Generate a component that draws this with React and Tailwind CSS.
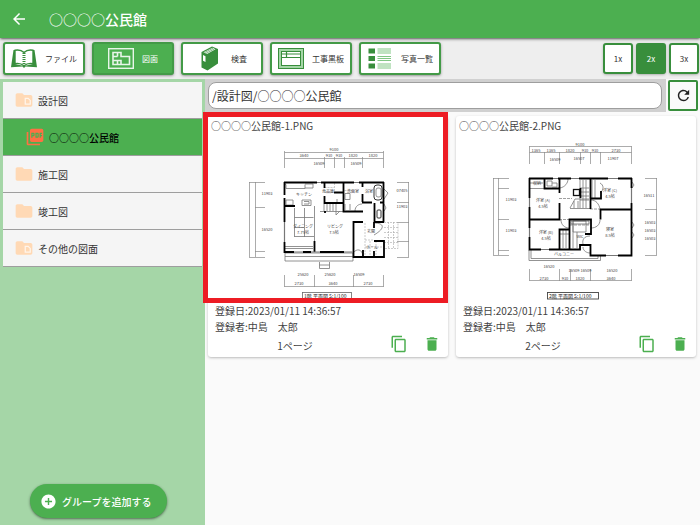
import { MdAddCircle, MdArrowBack, MdContentCopy, MdDelete, MdFolder, MdPictureAsPdf, MdRefresh } from "react-icons/md";

function FileIcon() {
  return (
    <svg viewBox="0 0 26 19" className="h-[19px] w-[26px]" aria-hidden="true">
      <path d="M2.500 1 0 18.200 11.500 17.600 13 19 14.500 17.600 26 18.200 23.500 1H22V15L13 17 4 15V1Z" fill="#388e3c" />
      <path d="M4 1.200C7 0.600 10.500 1 13 3.600 15.500 1 19 0.600 22 1.200V14.600C19 14 15.500 14.600 13 16.800 10.500 14.600 7 14 4 14.600Z" fill="#fff" stroke="#388e3c" strokeWidth="1.400" />
      <path d="M13 4V16.500" stroke="#388e3c" strokeWidth="3" strokeDasharray="1 1" />
    </svg>
  );
}

function PlanIcon() {
  return (
    <svg viewBox="0 0 26 21" className="h-[21px] w-[26px]" fill="none" stroke="#e8f5e9" aria-hidden="true">
      <rect x="0.700" y="0.700" width="24.600" height="19.600" strokeWidth="1.400" />
      <path d="M5 4.500H13V8.500H21.500V16.500H5ZM9.500 4.500V8.500M5 8.500H9.500M5 12.500H13V16.500M9.500 12.500V16.500" strokeWidth="1.600" />
    </svg>
  );
}

function InspectIcon() {
  return (
    <svg viewBox="0 0 18 25" className="h-[25px] w-[18px]" aria-hidden="true">
      <path d="M0.500 6 11 0.500 17 3V17.500L6.500 24.500 0.500 21.500Z" fill="#388e3c" />
      <path d="M2.500 6.300 11.500 1.800 14.500 3.200 6 8Z" fill="#fff" />
      <path d="M3.500 6.600 12 2.300M5 7.400 13.500 2.900" stroke="#388e3c" strokeWidth="0.600" />
      <path d="M2 9 4.500 10.200V16L2 14.800Z" fill="#fff" />
    </svg>
  );
}

function BoardIcon() {
  return (
    <svg viewBox="0 0 26 21" className="h-[21px] w-[26px]" fill="none" stroke="#388e3c" aria-hidden="true">
      <rect x="0.500" y="0.500" width="25" height="20" />
      <rect x="2" y="2" width="22" height="17" stroke="#a5d6a7" strokeWidth="2" />
      <rect x="3.500" y="3.500" width="19" height="14" />
      <path d="M3.500 6H22.500M3.500 9.500H22.500M8.500 3.500V9.500" strokeWidth="1.200" />
    </svg>
  );
}

function ListIcon() {
  return (
    <svg viewBox="0 0 24 21" className="h-[21px] w-6" aria-hidden="true">
      <path d="M0.500 0.500H7V5.500H0.500ZM0.500 8H7V13H0.500ZM0.500 15.500H7V20.500H0.500Z" fill="#388e3c" />
      <path
        d="M9.500 1H23M9.500 3H23M9.500 5H23M9.500 8.500H23M9.500 10.500H23M9.500 12.500H23M9.500 16H23M9.500 18H23M9.500 20H23"
        stroke="#81c784"
      />
    </svg>
  );
}

function FolderFileIcon() {
  return (
    <svg viewBox="0 0 24 24" className="h-5 w-5" aria-hidden="true">
      <path d="M10 4H4c-1.100 0-2 .9-2 2v12c0 1.100.9 2 2 2h16c1.100 0 2-.9 2-2V8c0-1.100-.9-2-2-2h-8l-2-2z" fill="#ffd9b5" />
      <path d="M13.500 10H17l2.500 2.500V17h-6Z" fill="none" stroke="#fff5eb" strokeWidth="1.500" />
    </svg>
  );
}

const PLAN_FONT = '"Noto Sans CJK JP", sans-serif';

function Labels({ items }) {
  return (
    <g fill="#444" stroke="none" fontSize="4" textAnchor="middle" fontFamily={PLAN_FONT}>
      {items.map(([x, y, t]) => (
        <text key={`${x}-${y}`} x={x} y={y}>{t}</text>
      ))}
    </g>
  );
}

function FirstFloor() {
  return (
    <svg viewBox="208 136 240 166" className="block w-full" fill="none" role="img" aria-label="1階 平面図">
      <path
        d="M284.500 152.500H383.500M284.500 158.500H383.500M284.500 151V168M324.500 157V168M334.500 157V168M344.500 157V168M362.500 157V168M383.500 151V168M249.500 182V257M255.500 182V257M249 182.500H265M255 207.500H265M255 251.500H265M249 257.500H265M408.500 182V257M397 182.500H409M397 202.500H409M397 222.500H409M397 241.500H409M397 257.500H409M284.500 286.500H383.500M284.500 275V287M314.500 275V287M353.500 275V287M383.500 275V287"
        stroke="#888" strokeWidth="0.700"
      />
      <path
        d="M384 222.500H398V248.500H384M384 227.500H398M384 232.500H398M384 237.500H398M384 242.500H398M388.500 222V248M393.500 222V248M365 223V255M370 241V255M376 241V255M365 240H374M365 247H382M324.500 187.500H334M324.500 192.500H334M334.500 183V192M344.500 190.500H352"
        stroke="#aaa" strokeWidth="0.600" strokeDasharray="2 1"
      />
      <path
        d="M285 184.500H286V188.500H305V184.500M305 184H313V188H305M286 200H293V205H286ZM302 200H311V205.500H302ZM304 201.500H309V204H304M314.500 206V241M294.500 208V237M294.500 217.500H304.500V208M304.500 217.500H313.500M294.500 227.500H304.500V237M304.500 217V227M294.500 236.500H314M285 246.500H313M285 248.500H313M285 253H353V261H285ZM285 256.500H353M319.500 262V268.500H329.500V262M319.500 265H329.500M324 204V211M327 204V211M330 204V211M333 204V211M336 204V215L340 211M320 211.500H343M345 193.500H350V199.500H345ZM345 204V210M350 204V210M355 211C355 206 359 204 362 204M374 223C384 223 386 228 374 235M353 253C357 248 362 249 363 256M384 189L388 193 384 199M384 204L386 208 384 211M337 199V202"
        stroke="#777" strokeWidth="0.800"
      />
      <rect x="374" y="185" width="8" height="15" rx="3" stroke="#333" />
      <rect x="376" y="188" width="5" height="9" rx="2" stroke="#666" strokeWidth="0.700" />
      <rect x="377" y="210" width="4" height="8" rx="1" stroke="#333" />
      <path
        d="M284 182.500H317M321 182.500H354M359 182.500H384M284.500 182V195M284.500 198V222M284.500 242V252H294M303 252H311M320 252H344M314.500 241V252M324.500 182V188M324.500 196V203H344M334 192.500H343M343.500 182V211.500H363M362.500 182V187M362.500 194V202M362 202.500H372M380 202.500H384M383.500 182V222M374.500 203V222H384M353.500 221V257H384V241H374M353 222H363M363 250V257M374 251V257M374 222V228M284 206H295M325 211V213"
        stroke="#000" strokeWidth="1.800"
      />
      <path d="M284.500 222V242M294 252H303M344 252H353M311 252H320M317 182.500H321M354 182.500H359" stroke="#777" strokeWidth="1.200" />
      <Labels
        items={[
          [334, 151, "9100"], [304, 157, "3640"], [329, 157, "910"], [339, 157, "910"], [353, 157, "1820"], [373, 157, "1820"],
          [319, 165, "16509"], [356, 165, "16509"], [267, 195, "11903"], [267, 231, "16520"], [402, 192, "07405"], [402, 208, "11903"],
          [304, 196, "キッチン"], [303, 228, "ダイニング"], [335, 228, "リビング"], [303, 234, "7.75帖"], [334, 234, "7.5帖"],
          [328, 193, "食品庫"], [353, 193, "洗面室"], [369, 193, "浴室"], [371, 233, "玄関"], [372, 249, "ホール"],
          [299, 285, "2730"], [333, 285, "3640"], [368, 285, "2730"], [303, 276, "25620"], [330, 276, "25620"], [359, 276, "16509"],
        ]}
      />
      <rect x="302.500" y="292.500" width="49" height="6.500" stroke="#666" strokeWidth="0.800" />
      <text x="304" y="298" fontSize="5" fill="#222" fontFamily={PLAN_FONT}>1階 平面図 S:1/100</text>
    </svg>
  );
}

function SecondFloor() {
  return (
    <svg viewBox="456 136 240 166" className="block w-full" fill="none" role="img" aria-label="2階 平面図">
      <path
        d="M529.500 146.500H631.500M529.500 152.500H631.500M529.500 146V164M544.500 152V164M559.500 152V164M580.500 152V164M590.500 152V164M600.500 152V164M631.500 146V164M493.500 178V255M498.500 178V255M493 178.500H509M498 188.500H509M498 219.500H509M498 250.500H509M493 255.500H509M656.500 178V255M645 178.500H657M645 209.500H657M645 255.500H657M529.500 280.500H631.500M529.500 269V281M559.500 269V281M570.500 269V281M590.500 269V281M631.500 269V281"
        stroke="#888" strokeWidth="0.700"
      />
      <path
        d="M529 188.500H544M530 183H543M547 181H552V186H547ZM560 188C565 187 568 183 568 179M580 180V208M583 180V208M586 180V208M580 188H589M580 192H589M580 196H589M580 200H589M570 208L575 199H589M574 208V201M578 208V201M570 208.500H590M529 250V260.500H600.500V255M531 250V258.500H598V255M592 180V198M595 180V198M600 183C604 185 604 190 600 193M591 200C596 200 599 204 600 209M561 220C561 225 565 228 569 228M591 228C596 228 600 225 600 220M573 221H586V232H573ZM573 221V248M577 232V248M560 234H569M563 230V248M566 230V248M590 236C584 236 582 240 583 244M583 247C583 251 587 253 590 253M552 183H557V187H552M632 182L634 185 632 188M632 222L634 225 632 228M632 232L634 235 632 238"
        stroke="#777" strokeWidth="0.800"
      />
      <path d="M559 198.500H572M559 219.500H570M590 209H600M570 225H590" stroke="#888" strokeWidth="0.800" strokeDasharray="3 1" />
      <rect x="573.500" y="189.500" width="6" height="6" stroke="#111" strokeWidth="1.300" />
      <rect x="571" y="221" width="18" height="3" stroke="#555" strokeWidth="0.700" />
      <path
        d="M529 178.500H553M558 178.500H571M579 178.500H608M618 178.500H632M529.500 178V198M529.500 207V228M529.500 237V249.500H541M549 249.500H561M544.500 178V188.500H560M559.500 178V193M559.500 203V219.500H529M590.500 178V209M580.500 188V198M590 198.500H601V191M600.500 209V219.500M600 209.500H632M631.500 178V188M631.500 203V255.500H618M606 255.500H590.500V245H580V249.500H559M569.500 249V219.500H591V234H585M559.500 249V229.500H569M559.500 205V219.500"
        stroke="#000" strokeWidth="1.800"
      />
      <path d="M529.500 198V207M529.500 228V237M541 249.500H549M606 255.500H618M608 178.500H618M571 178.500H579M553 178.500H558M631.500 188V203" stroke="#777" strokeWidth="1.200" />
      <Labels
        items={[
          [580, 146, "9100"], [536, 152, "1365"], [551, 152, "1365"], [570, 152, "1820"], [585, 152, "910"], [595, 152, "910"], [616, 152, "2730"],
          [555, 161, "16509"], [579, 160, "16507"], [613, 160, "11907"], [511, 201, "11903"], [511, 232, "11903"], [649, 197, "16511"],
          [650, 224, "16503"], [650, 232, "16503"], [650, 240, "16503"], [543, 202, "洋室 (A)"], [543, 208, "4.5帖"],
          [610, 192, "洋室 (C)"], [610, 198, "4.5帖"], [546, 234, "洋室 (B)"], [546, 240, "4.5帖"], [610, 231, "寝室"], [610, 237, "8.5帖"],
          [564, 256, "バルコニー"], [580, 238, "WIC"], [537, 185, "収納"],
          [544, 280, "2730"], [565, 280, "910"], [580, 280, "1820"], [611, 280, "3640"], [549, 268, "16520"], [580, 272, "16509 16509"], [612, 272, "16520"],
        ]}
      />
      <rect x="547.500" y="292.500" width="51" height="6.500" stroke="#444" strokeWidth="0.900" />
      <text x="549" y="298" fontSize="5" fill="#222" fontFamily={PLAN_FONT}>2階 平面図 S:1/100</text>
    </svg>
  );
}

const tabs = [
  { label: "ファイル", Icon: FileIcon },
  { label: "図面", Icon: PlanIcon, active: true },
  { label: "検査", Icon: InspectIcon },
  { label: "工事黒板", Icon: BoardIcon },
  { label: "写真一覧", Icon: ListIcon },
];

const groups = [
  { label: "設計図", file: true },
  { label: "○○○○公民館", active: true },
  { label: "施工図" },
  { label: "竣工図" },
  { label: "その他の図面", file: true },
];

function Tab({ label, Icon, active }) {
  return (
    <button
      type="button"
      className={`flex h-[33px] w-[82px] items-center justify-center gap-2 rounded-[3px] border-2 border-[#439a47] text-[8px] shadow-sm shadow-black/30 ${active ? "bg-[#4caf50] text-white" : "bg-white text-[#333]"}`}
    >
      <span className="flex w-[26px] shrink-0 justify-center">
        <Icon />
      </span>
      <span className="whitespace-nowrap">{label}</span>
    </button>
  );
}

function ZoomButton({ label, active }) {
  return (
    <button
      type="button"
      className={`h-[31px] w-[30px] rounded-[3px] border-2 border-[#388e3c] text-[8px] shadow-sm shadow-black/20 ${active ? "bg-[#388e3c] text-white" : "bg-white text-[#333]"}`}
    >
      {label}
    </button>
  );
}

function Group({ label, file, active }) {
  return (
    <li>
      <button
        type="button"
        className={`flex h-[37px] w-full items-center gap-1 border-b border-[#9e9e9e] text-left text-[10px] ${active ? "bg-[#4caf50] pl-[22px] font-medium text-black" : "bg-[#f5f5f5] pl-[11px] text-[#333]"}`}
      >
        {active ? <MdPictureAsPdf size={20} color="#ff7043" /> : file ? <FolderFileIcon /> : <MdFolder size={20} color="#ffd9b5" />}
        {label}
      </button>
    </li>
  );
}

function Card({ title, pages, selected, children }) {
  return (
    <article className="relative rounded-[3px] bg-white text-[10px] text-[#424242] shadow-sm shadow-black/20">
      <h2 className="h-5 px-[3px] leading-5">{title}</h2>
      {children}
      <div className="px-[7px] pt-px leading-4">
        <p>登録日:2023/01/11 14:36:57</p>
        <p>登録者:中島　太郎</p>
      </div>
      <div className="flex h-[22px] items-center pr-[7px] pb-1">
        <p className="flex-1 pt-1 pr-2 text-center leading-4">{pages}</p>
        <div className="flex gap-[15px] text-[#4caf50]">
          <button type="button" aria-label="コピー"><MdContentCopy size={18} /></button>
          <button type="button" aria-label="削除"><MdDelete size={18} /></button>
        </div>
      </div>
      {selected && <div className="pointer-events-none absolute -top-1 right-0 -left-[5px] h-[191px] border-5 border-[#ed1c24]" />}
    </article>
  );
}

export default function App() {
  return (
    <div className="flex min-h-screen flex-col bg-[#fafafa] font-['Noto_Sans_CJK_JP','Noto_Sans',sans-serif]">
      <header className="relative flex h-[38px] items-center gap-[21px] bg-[#4caf50] px-[10px] text-white shadow-sm shadow-black/50">
        <button type="button" aria-label="戻る"><MdArrowBack size={18} /></button>
        <h1 className="text-[14px] font-medium">○○○○公民館</h1>
      </header>

      <div className="flex h-[41px] items-center justify-between bg-[#eee] pr-px pl-[3px]">
        <nav className="flex gap-[7px]">
          {tabs.map((t) => <Tab key={t.label} {...t} />)}
        </nav>
        <div className="flex gap-[3px]">
          <ZoomButton label="1x" />
          <ZoomButton label="2x" active />
          <ZoomButton label="3x" />
        </div>
      </div>

      <div className="flex flex-1">
        <aside className="flex w-[205px] shrink-0 flex-col justify-between bg-[#a5d6a7] p-[3px]">
          <ul>
            {groups.map((g) => <Group key={g.label} {...g} />)}
          </ul>
          <button
            type="button"
            className="mr-2 mb-1 flex h-[34px] w-[137px] items-center gap-[5px] self-center rounded-full bg-[#4caf50] pl-[10px] text-[10px] font-medium text-white shadow-sm shadow-black/40"
          >
            <MdAddCircle size={17} />
            グループを追加する
          </button>
        </aside>

        <main className="min-w-0 flex-1">
          <div className="flex h-[33px]">
            <div className="flex flex-1 items-center bg-[#d0d0d0] pr-1 pl-[3px]">
              <input
                type="text"
                aria-label="フォルダーのパス"
                defaultValue="/設計図/○○○○公民館"
                className="h-[27px] w-full rounded-lg border border-[#9e9e9e] bg-white px-[3px] text-[12px] text-[#333]"
              />
            </div>
            <div className="flex items-center px-[2px]">
              <button type="button" aria-label="更新" className="flex h-[31px] w-[30px] items-center justify-center rounded-[2px] border-2 border-[#388e3c] bg-[#fafafa] text-[#212121]">
                <MdRefresh size={17} />
              </button>
            </div>
          </div>

          <section className="grid grid-cols-2 gap-2 pt-1 pr-1 pl-[3px]">
            <Card title="○○○○公民館-1.PNG" pages="1ページ" selected>
              <FirstFloor />
            </Card>
            <Card title="○○○○公民館-2.PNG" pages="2ページ">
              <SecondFloor />
            </Card>
          </section>
        </main>
      </div>
    </div>
  );
}
